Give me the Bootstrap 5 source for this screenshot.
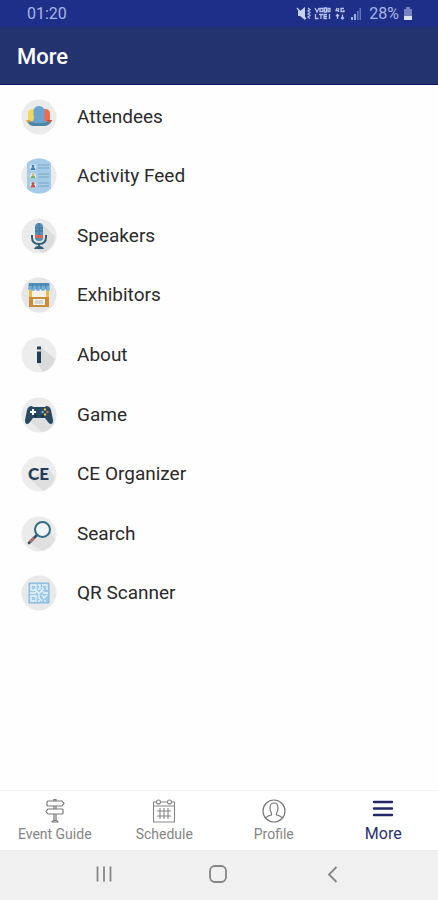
<!DOCTYPE html>
<html lang="en">
<head>
<meta charset="utf-8">
<meta name="viewport" content="width=device-width, initial-scale=1">
<title>More</title>
<link href="https://cdn.jsdelivr.net/npm/bootstrap@5.3.0/dist/css/bootstrap.min.css" rel="stylesheet">
<style>
  body { font-family: Roboto, "Liberation Sans", sans-serif; background: #fefefe; }
  .status-bar { height: 27px; background: #1d2f89; color: #a9b5e3; font-size: 16px; line-height: 27px; padding: 0 25px 0 27px; }
  .app-header { height: 58px; background: #23336f; border-bottom: 1px solid #0b1466; padding: 0 17px; }
  .app-header h1 { font-size: 22px; line-height: 28px; font-weight: 500; color: #fff; padding-top: 2px; }
  .menu-list { display: grid; grid-template-rows: repeat(9, 1fr); min-height: 536px; margin-top: 2px; }
  .menu-link { gap: 20px; padding: 0 21px; color: #2a2a2a; font-size: 19px; line-height: 24px; }
  .menu-link svg { width: 36px; height: 36px; }
  .tab-bar { height: 60px; border-top: 1px solid #f3f3f3; background: #fff; }
  .tab-link { color: #858585; font-size: 14px; line-height: 18px; padding-top: 7px; gap: 1px; }
  .tab-link.active { color: #28306f; font-size: 16px; }
  .tab-link svg { width: 26px; height: 26px; }
  .system-bar { height: 50px; background: #f0f0f0; padding: 0 47px; }
  .system-bar svg { width: 24px; height: 24px; }
</style>
<script src="https://cdn.jsdelivr.net/npm/bootstrap@5.3.0/dist/js/bootstrap.bundle.min.js"></script>
</head>
<body>
<div class="d-flex flex-column min-vh-100">
  <div class="status-bar d-flex justify-content-between align-items-center">
    <span>01:20</span>
    <div class="d-flex align-items-center gap-2">
      <svg width="66" height="16" viewBox="0 0 66 16" fill="none" stroke="#b8c2ea" stroke-width="1.3" aria-hidden="true">
        <path d="M3 5h2l5-4v13l-5-4H3z" fill="#c8d0f0" stroke="none"/>
        <path d="M2 2l9 11" stroke="#c8d0f0"/>
        <path d="M13 2l2 1.500-2 1.500 2 1.500-2 1.500 2 1.500-2 1.500 2 1.500"/>
        <path d="M20 2l2 4 2-4M25 2.500h3v3h-3zM29.500 2h2v4h-2zM33 2.500h2v3h-2zM20.500 8v4.500h3M24 8.500h4M26 8.500v4.500M32 8.500h-3v4h3M29 10.500h3M34.500 8v5"/>
        <path d="M42 2l-1 2.500h3M43.500 2v4M49 2.500h-3v3h3v-1.500M42.500 13V9M41 10l1.500-1.500L44 10M47.500 8.500v4M46 11.500l1.500 1.500 1.500-1.500"/>
        <g stroke="none"><path d="M56 11h2v3h-2zM59 8h2v6h-2z" fill="#a0acda"/><path d="M62 5h1.500v9H62zM64.500 2H66v12h-1.500z" fill="#6575b8"/></g>
      </svg>
      <span class="d-flex align-items-center gap-1">28%
        <svg width="10" height="15" viewBox="0 0 10 15" aria-hidden="true"><path d="M3 1h4v2h2v7H1V3h2z" fill="#7381bf"/><path d="M1 10h8v4H1z" fill="#dce1f5"/></svg>
      </span>
    </div>
  </div>
  <header class="app-header d-flex align-items-center">
    <h1 class="mb-0">More</h1>
  </header>
  <main class="flex-grow-1">
    <nav class="menu-list" aria-label="More options">
      <a href="#" class="menu-link d-flex align-items-center text-decoration-none">
        <svg viewBox="0 0 36 36" aria-hidden="true"><circle cx="18" cy="18" r="17.500" fill="#ebebeb"/>
          <path d="M7 24V15q0-5 5-5h2v14z" fill="#f3d65c"/><path d="M29 22V15q0-5-5-5h-2v14z" fill="#ee6a50"/>
          <path d="M5 21h5v5q-4-1-5-5z" fill="#f0a83f"/><path d="M26 21h5q-1 4-5 5z" fill="#d34b38"/>
          <path d="M12 22q1-2 1-5-1-1-.500-3Q12 7 18 7t5.500 7q.500 2-.500 3 0 3 1 5l5 1q-2 4-6 4H13q-4 0-6-4z" fill="#69a5ce"/>
          <path d="M7 22.500q11 3.500 22 0-1 4.500-6 4.500H13q-5 0-6-4.500z" fill="#4e86a5"/></svg>
        Attendees</a>
      <a href="#" class="menu-link d-flex align-items-center text-decoration-none">
        <svg viewBox="0 0 36 36" aria-hidden="true"><circle cx="18" cy="18" r="17.500" fill="#ebebeb"/>
          <path d="M6 5Q11 .500 18 .500T30 5v26q-5 4.500-12 4.500T6 31z" fill="#a4cce8"/>
          <g fill="#d8eaf5"><circle cx="12" cy="9.500" r="3.200"/><circle cx="12" cy="18" r="3.200"/><circle cx="12" cy="27" r="3.200"/></g>
          <path d="M9.500 12q.500-3 2.500-3t2.500 3z" fill="#467fae"/><circle cx="12" cy="8" r="1.300" fill="#467fae"/>
          <path d="M9.500 20.500q.500-3 2.500-3t2.500 3z" fill="#76a965"/><circle cx="12" cy="16.500" r="1.300" fill="#d8b75b"/>
          <path d="M9.500 29.500q.500-3 2.500-3t2.500 3z" fill="#ce4a43"/><circle cx="12" cy="25.500" r="1.500" fill="#b95143"/>
          <path d="M17 7h11M17 10h11M17 16h11M17 19h11M17 25h11M17 28h11" stroke="#7ba4c2" stroke-width="1.200"/></svg>
        Activity Feed</a>
      <a href="#" class="menu-link d-flex align-items-center text-decoration-none">
        <svg viewBox="0 0 36 36" aria-hidden="true"><circle cx="18" cy="18" r="17.500" fill="#ebebeb"/><path d="M21 6L34 18Q33 30 22 35l-8-5z" fill="#dcdcdc"/>
          <path d="M11 17v2q0 7 7 7t7-7v-2M18 26v4" fill="none" stroke="#2d6078" stroke-width="2"/><path d="M13 31q1-3 5-3t5 3z" fill="#2d6078"/>
          <rect x="14" y="5" width="8" height="18" rx="4" fill="#5790b8"/><path d="M14 18h8v1q0 4-4 4t-4-4z" fill="#5390b2"/><path d="M14 17h8v3h-8z" fill="#d9665b"/>
          <path d="M14 10h3M14 13h3M19 10h3M19 13h3M18 5v12" stroke="#34698e" stroke-width=".800"/></svg>
        Speakers</a>
      <a href="#" class="menu-link d-flex align-items-center text-decoration-none">
        <svg viewBox="0 0 36 36" aria-hidden="true"><circle cx="18" cy="18" r="17.500" fill="#e6e6e6"/>
          <path d="M9 12h18v9H9z" fill="#f3f1e8"/><path d="M8 12h3v14H8zM25 12h3v14h-3z" fill="#edbd47"/>
          <path d="M8 20h20v10H8z" fill="#c98e35"/><path d="M12 22h12v6H12z" fill="#f2f2f2"/><path d="M14 24h8M14 26h8" stroke="#bbb" stroke-width="1"/>
          <path d="M8 6h20l1 6q0 2-2 2t-2.500-2q-.500 2-2.500 2t-2.500-2q-.500 2-2.500 2t-2.500-2q-.500 2-2.500 2t-2.500-2Q8 14 7 12z" fill="#75afd6"/>
          <path d="M8 6h20l.500 3H7.500z" fill="#4f8eb9"/><path d="M12 6l-1 6M16 6v6M20 6v6M24 6l1 6" stroke="#4685b1"/></svg>
        Exhibitors</a>
      <a href="#" class="menu-link d-flex align-items-center text-decoration-none">
        <svg viewBox="0 0 36 36" aria-hidden="true"><circle cx="18" cy="18" r="17.500" fill="#ededed"/><path d="M20 10L34 22q-3 10-12 13l-6-9z" fill="#dadada"/>
          <path d="M16 9.500h4v3h-4zM16 14.500h4V26h-4z" fill="#203f55"/></svg>
        About</a>
      <a href="#" class="menu-link d-flex align-items-center text-decoration-none">
        <svg viewBox="0 0 36 36" aria-hidden="true"><circle cx="18" cy="18" r="17.500" fill="#ebebeb"/><path d="M9 24L29 12l5 13q-4 9-13 10z" fill="#dedede"/>
          <path d="M12 10h12l1-1q4 0 5 4l2 10q0 4-2 4-2 0-3-2l-3-4H12l-3 4q-1 2-3 2-2 0-2-4l2-10q1-4 5-4z" fill="#284a61"/>
          <path d="M12 12v6M9 15h6" stroke="#fff" stroke-width="2"/><g fill="#eaba4e"><circle cx="24" cy="12.500" r="1.200"/><circle cx="24" cy="17.500" r="1.200"/></g><circle cx="21.500" cy="15" r="1.200" fill="#76b4d2"/><circle cx="26.500" cy="15" r="1.200" fill="#e06255"/>
          <circle cx="14.500" cy="19" r="1.500" fill="#173449"/><circle cx="21.500" cy="19" r="1.500" fill="#173449"/></svg>
        Game</a>
      <a href="#" class="menu-link d-flex align-items-center text-decoration-none">
        <svg viewBox="0 0 36 36" aria-hidden="true"><circle cx="18" cy="18" r="17.500" fill="#ededed"/><path d="M9 23L27 12l7 9q-3 10-12 14z" fill="#dedede"/>
          <text x="17.500" y="23.500" text-anchor="middle" font-family="Lato, sans-serif" font-weight="900" font-size="17" fill="#243c5a">CE</text></svg>
        CE Organizer</a>
      <a href="#" class="menu-link d-flex align-items-center text-decoration-none">
        <svg viewBox="0 0 36 36" aria-hidden="true"><circle cx="18" cy="18" r="17.500" fill="#ebebeb"/><path d="M9 27L28 15l6 8q-4 9-13 12z" fill="#e0e0e0"/>
          <path d="M16 19L8 27" stroke="#31556b" stroke-width="2.800" stroke-linecap="round"/><path d="M13 22l-4 4" stroke="#cf6761" stroke-width="2"/>
          <circle cx="21.500" cy="13.500" r="7.500" fill="#f1f5f7" stroke="#326d85" stroke-width="2"/></svg>
        Search</a>
      <a href="#" class="menu-link d-flex align-items-center text-decoration-none">
        <svg viewBox="0 0 36 36" aria-hidden="true"><circle cx="18" cy="18" r="17.500" fill="#e9e9e9"/>
          <path d="M8 8h20v20H8z" fill="#9cc9e8"/><g fill="none" stroke="#e9f4fb" stroke-width="1.300"><path d="M10 10h5v5h-5zM21 10h5v5M10 21h5v5h-5zM17 10h2v4h-2M9 18h5l2-2 2 3 3-4 2 3h4M18 20v3l3 3M21 20l2 3 3-3M24 25v2M17 26h2M21 12l2 3"/></g><path d="M8 8h20v20H8z" fill="none" stroke="#84b8dc"/></svg>
        QR Scanner</a>
    </nav>
  </main>
  <nav class="tab-bar row row-cols-4 g-0" aria-label="Main">
    <a href="#" class="tab-link col d-flex flex-column align-items-center text-decoration-none">
      <svg viewBox="0 0 26 26" fill="none" stroke="#777" stroke-width="1.200" aria-hidden="true"><path d="M6 3h14l2 2.500L20 8H6q-1 0-1-1V4q0-1 1-1zM20 11H6l-2 2.500L6 16h14q1 0 1-1v-3q0-1-1-1zM12 3V1.500h2V3M12 8v3M14 8v3M12 16v7M14 16v7M10 24q0-1.500 3-1.500t3 1.500z"/></svg>
      Event Guide</a>
    <a href="#" class="tab-link col d-flex flex-column align-items-center text-decoration-none">
      <svg viewBox="0 0 26 26" fill="none" stroke="#858585" stroke-width="1.100" aria-hidden="true"><path d="M5.500 4h-3v20h21V4h-3M9.500 4h7M2.500 8h21M6 13h14M6 18h14M9 10v11M13 10v11M17 10v11"/><circle cx="7.500" cy="4" r="2"/><circle cx="18.500" cy="4" r="2"/></svg>
      Schedule</a>
    <a href="#" class="tab-link col d-flex flex-column align-items-center text-decoration-none">
      <svg viewBox="0 0 26 26" fill="none" stroke="#777" stroke-width="1.200" aria-hidden="true"><circle cx="13" cy="13" r="11"/><path d="M5 20q1-2 5.500-3v-2Q9 13 9 10q0-5 4-5t4 5q0 3-1.500 5v2q4.500 1 5.500 3"/></svg>
      Profile</a>
    <a href="#" class="tab-link active col d-flex flex-column align-items-center text-decoration-none" aria-current="page">
      <svg viewBox="0 0 26 26" stroke="#202867" stroke-width="2.400" stroke-linecap="round" aria-hidden="true"><path d="M4 4h18M4 10.500h18M4 17h18"/></svg>
      More</a>
  </nav>
  <div class="system-bar d-flex justify-content-around align-items-center">
    <button type="button" class="btn border-0 p-0 d-flex" aria-label="Recent apps"><svg viewBox="0 0 24 24" stroke="#858585" stroke-width="1.800" aria-hidden="true"><path d="M5.500 3.500v15M12 3.500v15M18.500 3.500v15"/></svg></button>
    <button type="button" class="btn border-0 p-0 d-flex" aria-label="Home"><svg viewBox="0 0 24 24" fill="none" stroke="#858585" stroke-width="1.800" aria-hidden="true"><rect x="3" y="3" width="16" height="16" rx="5"/></svg></button>
    <button type="button" class="btn border-0 p-0 d-flex" aria-label="Back"><svg viewBox="0 0 24 24" fill="none" stroke="#858585" stroke-width="1.800" aria-hidden="true"><path d="M14.500 4L7 11.500l7.500 7.500"/></svg></button>
  </div>
</div>
</body>
</html>
